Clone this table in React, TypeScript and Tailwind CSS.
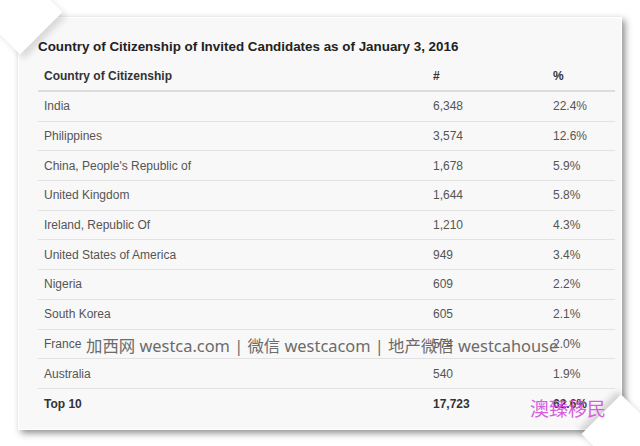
const rows = [
  { country: "India", count: "6,348", pct: "22.4%" },
  { country: "Philippines", count: "3,574", pct: "12.6%" },
  { country: "China, People's Republic of", count: "1,678", pct: "5.9%" },
  { country: "United Kingdom", count: "1,644", pct: "5.8%" },
  { country: "Ireland, Republic Of", count: "1,210", pct: "4.3%" },
  { country: "United States of America", count: "949", pct: "3.4%" },
  { country: "Nigeria", count: "609", pct: "2.2%" },
  { country: "South Korea", count: "605", pct: "2.1%" },
  { country: "France", count: "574", pct: "2.0%" },
  { country: "Australia", count: "540", pct: "1.9%" },
];

export default function App() {
  return (
    <div
      className="relative w-[640px] h-[446px] bg-white pt-[17px] pl-[18px] overflow-hidden"
      style={{ fontFamily: '"Liberation Sans", Arial, sans-serif' }}
    >
      {/* paper card */}
      <div className="relative w-[604px] h-[413px] bg-[#f8f8f8] border border-white shadow-[3px_3px_7px_rgba(0,0,0,0.45)] pt-[21px] pl-[19px] pr-[8px]">
        <h2 className="text-[13.4px] leading-[16px] font-bold text-[#222]">
          Country of Citizenship of Invited Candidates as of January 3, 2016
        </h2>

        <div className="mt-[7px] w-[577px] text-[12px]">
          <div className="grid grid-cols-[389px_120px_68px] h-[30px] items-center border-b-2 border-[#dddddd] font-bold text-[#333]">
            <div className="pl-[6px]">Country of Citizenship</div>
            <div className="pl-[6px]">#</div>
            <div className="pl-[6px]">%</div>
          </div>
          {rows.map((r) => (
            <div
              key={r.country}
              className="grid grid-cols-[389px_120px_68px] h-[29.7px] items-center border-b border-[#e2e2e2] text-[#555]"
            >
              <div className="pl-[6px]">{r.country}</div>
              <div className="pl-[6px]">{r.count}</div>
              <div className="pl-[6px]">{r.pct}</div>
            </div>
          ))}
          <div className="grid grid-cols-[389px_120px_68px] h-[29.7px] items-center font-bold text-[#333]">
            <div className="pl-[6px]">Top 10</div>
            <div className="pl-[6px]">17,723</div>
            <div className="pl-[6px]">62.6%</div>
          </div>
        </div>
      </div>

      {/* curled corners */}
      <div className="absolute left-[-10px] top-[-18px] w-[60px] h-[60px] bg-white rotate-45 shadow-[6px_0_6px_rgba(0,0,0,0.12)]" />
      <div className="absolute right-[-4px] bottom-[-14px] w-[50px] h-[56px] bg-white rotate-45 shadow-[-5px_0_6px_rgba(0,0,0,0.15)]" />

      {/* watermarks */}
      <div
        className="absolute left-[86px] top-[334px] text-[16.4px] leading-[24px] text-[#6b6b6b] whitespace-nowrap"
        style={{ fontFamily: '"Noto Sans", "Noto Sans CJK SC", sans-serif' }}
      >
        加西网 westca.com | 微信 westcacom | 地产微信 westcahouse
      </div>
      <div
        className="absolute left-[530px] top-[396px] text-[19px] leading-[24px] text-[#d24fdc] opacity-90 whitespace-nowrap"
        style={{ fontFamily: '"Noto Sans CJK SC", sans-serif' }}
      >
        澳臻移民
      </div>
    </div>
  );
}
